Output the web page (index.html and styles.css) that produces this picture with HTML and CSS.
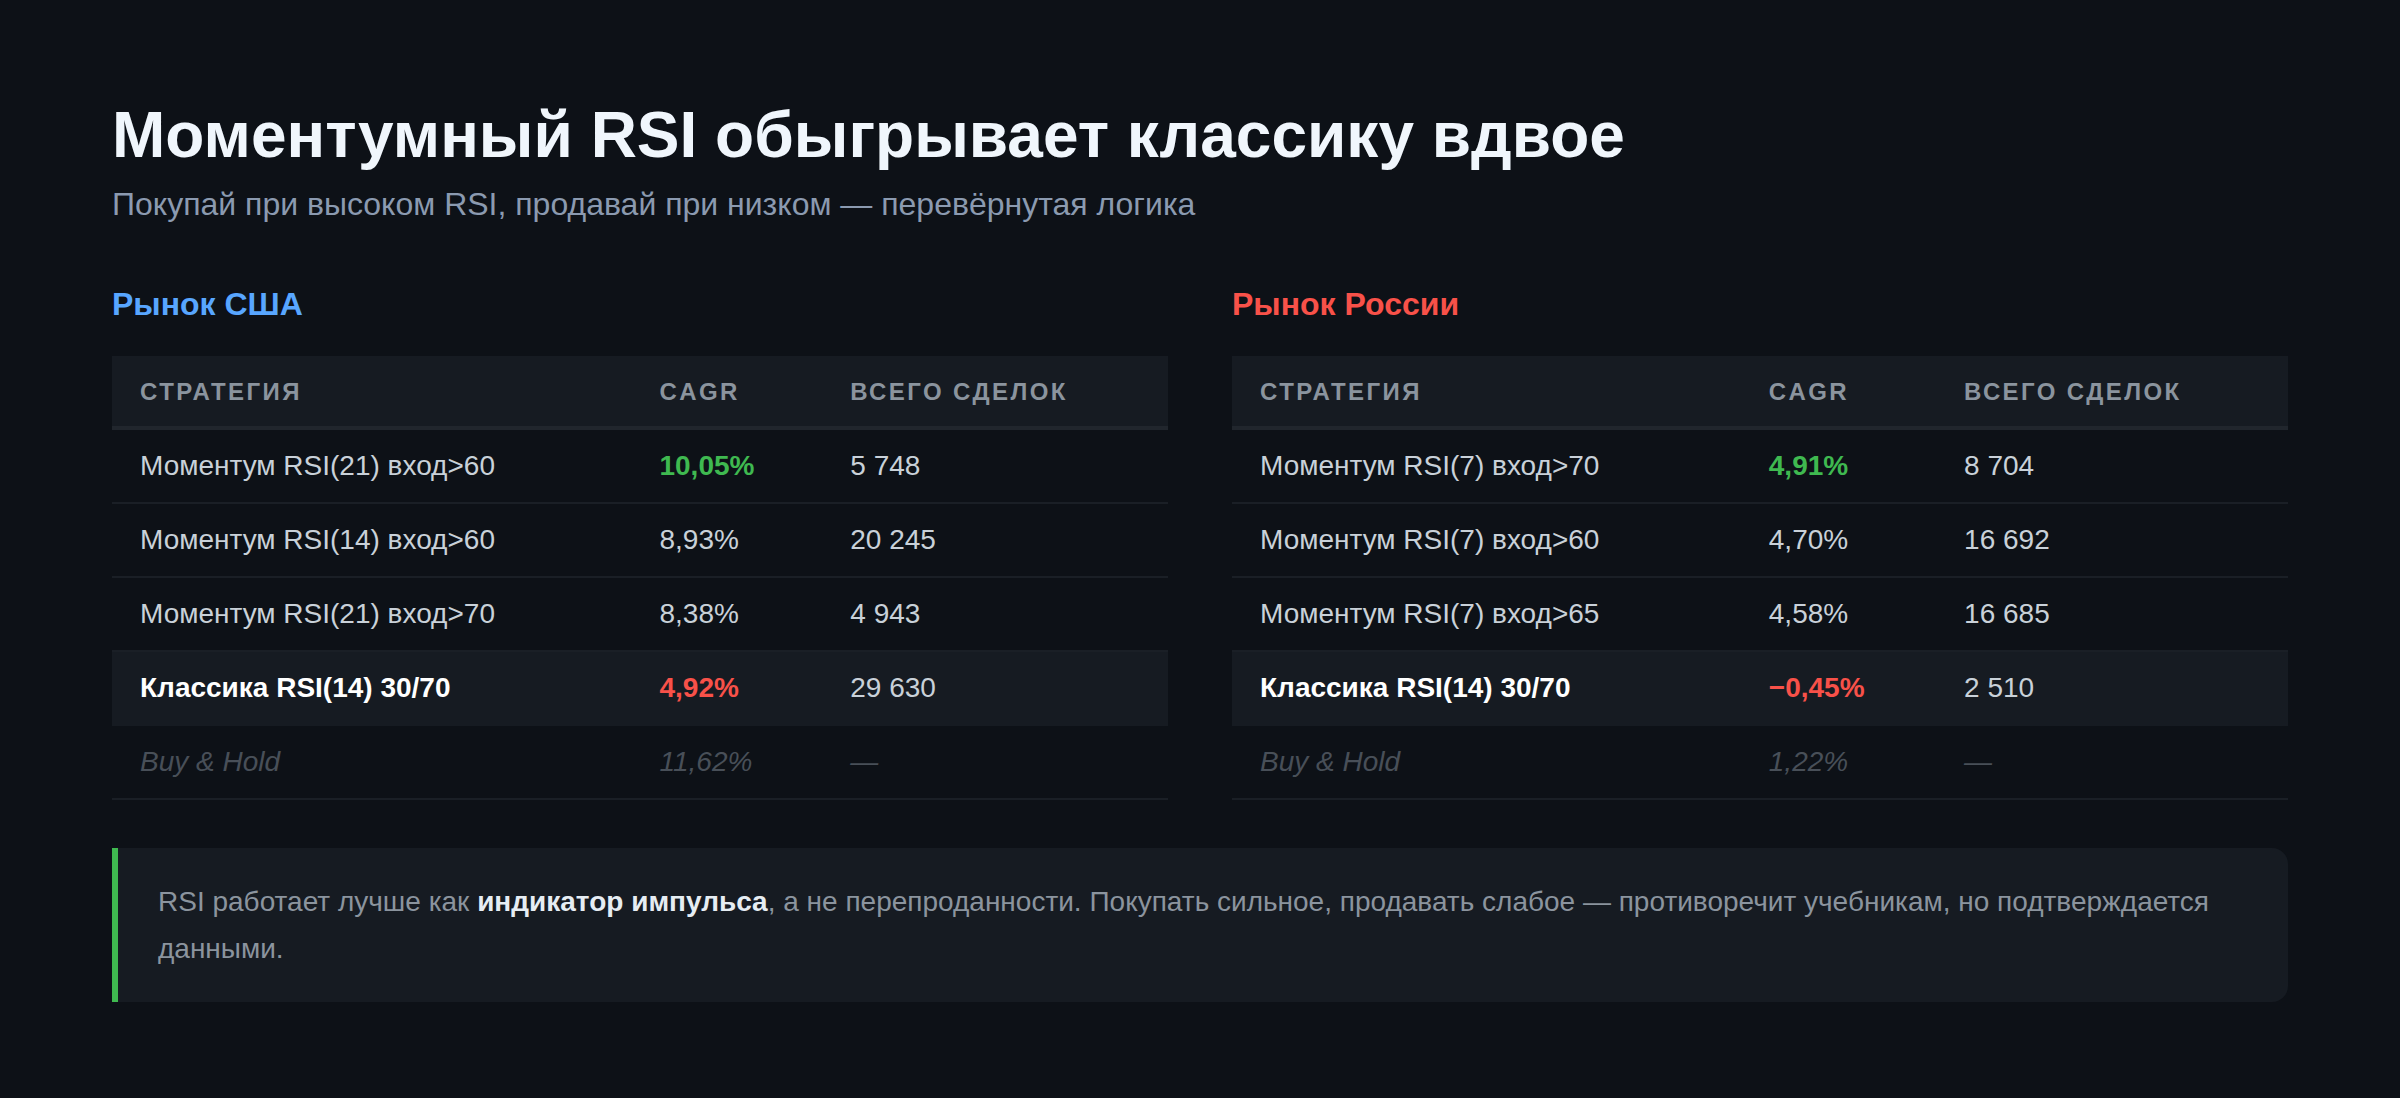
FILE: index.html
```html
<!DOCTYPE html>
<html lang="ru">
<head>
<meta charset="utf-8">
<title>Моментумный RSI</title>
<link rel="stylesheet" href="styles.css">
</head>
<body>
<main class="page">
  <h1 class="title">Моментумный RSI обыгрывает классику вдвое</h1>
  <p class="subtitle">Покупай при высоком RSI, продавай при низком — перевёрнутая логика</p>

  <div class="markets">
    <section class="market">
      <h2 class="market-title us">Рынок США</h2>
      <table class="results">
        <thead>
          <tr><th>Стратегия</th><th>CAGR</th><th>Всего сделок</th></tr>
        </thead>
        <tbody>
          <tr><td>Моментум RSI(21) вход&gt;60</td><td class="pos">10,05%</td><td>5 748</td></tr>
          <tr><td>Моментум RSI(14) вход&gt;60</td><td>8,93%</td><td>20 245</td></tr>
          <tr><td>Моментум RSI(21) вход&gt;70</td><td>8,38%</td><td>4 943</td></tr>
          <tr class="classic"><td>Классика RSI(14) 30/70</td><td class="neg">4,92%</td><td>29 630</td></tr>
          <tr class="hold"><td>Buy &amp; Hold</td><td>11,62%</td><td>—</td></tr>
        </tbody>
      </table>
    </section>

    <section class="market">
      <h2 class="market-title ru">Рынок России</h2>
      <table class="results">
        <thead>
          <tr><th>Стратегия</th><th>CAGR</th><th>Всего сделок</th></tr>
        </thead>
        <tbody>
          <tr><td>Моментум RSI(7) вход&gt;70</td><td class="pos">4,91%</td><td>8 704</td></tr>
          <tr><td>Моментум RSI(7) вход&gt;60</td><td>4,70%</td><td>16 692</td></tr>
          <tr><td>Моментум RSI(7) вход&gt;65</td><td>4,58%</td><td>16 685</td></tr>
          <tr class="classic"><td>Классика RSI(14) 30/70</td><td class="neg">−0,45%</td><td>2 510</td></tr>
          <tr class="hold"><td>Buy &amp; Hold</td><td>1,22%</td><td>—</td></tr>
        </tbody>
      </table>
    </section>
  </div>

  <div class="note">
    RSI работает лучше как <strong>индикатор импульса</strong>, а не перепроданности. Покупать сильное, продавать слабое — противоречит учебникам, но подтверждается данными.
  </div>
</main>
</body>
</html>
```

FILE: styles.css
```css
* { box-sizing: border-box; }

html, body {
  margin: 0;
  background: #0d1117;
}

body {
  font-family: "Liberation Sans", Arial, sans-serif;
  color: #c9d1d9;
}

.page {
  padding: 97px 112px 60px;
}

.title {
  margin: 0;
  font-size: 64px;
  line-height: 1.2;
  font-weight: 700;
  color: #f0f6fc;
}

.subtitle {
  margin: 8px 0 0;
  font-size: 32px;
  line-height: 1.4;
  color: #8b9ab0;
}

.markets {
  display: grid;
  grid-template-columns: 1fr 1fr;
  gap: 64px;
  margin-top: 55px;
}

.market-title {
  margin: 0 0 30px;
  font-size: 32px;
  line-height: 1.4;
  font-weight: 700;
}

.market-title.us { color: #58a6ff; }
.market-title.ru { color: #f85149; }

.results {
  width: 100%;
  border-collapse: collapse;
}

.results th {
  text-align: left;
  background: #161b22;
  color: #8b949e;
  font-size: 24px;
  line-height: 1.2;
  font-weight: 700;
  text-transform: uppercase;
  letter-spacing: 2.4px;
  padding: 22px 28px 19px;
  border-bottom: 4px solid #21262d;
}

.results td {
  font-size: 28px;
  line-height: 34px;
  padding: 19px 28px;
  border-bottom: 2px solid #1a1f26;
  white-space: nowrap;
}

.results .pos { color: #3fb950; font-weight: 700; }
.results .neg { color: #f85149; font-weight: 700; }

.results tr.classic td {
  background: #161b22;
  border-bottom-color: #161b22;
}
.results tr.classic td:first-child {
  color: #ffffff;
  font-weight: 700;
}

.results tr.hold td {
  color: #484f58;
  font-style: italic;
}

.note {
  margin-top: 48px;
  background: #161b22;
  border-left: 6px solid #3fb950;
  border-radius: 0 16px 16px 0;
  padding: 30px 40px;
  font-size: 28px;
  line-height: 47px;
  color: #8b949e;
}

.note strong {
  color: #e6edf3;
  font-weight: 700;
}
```
